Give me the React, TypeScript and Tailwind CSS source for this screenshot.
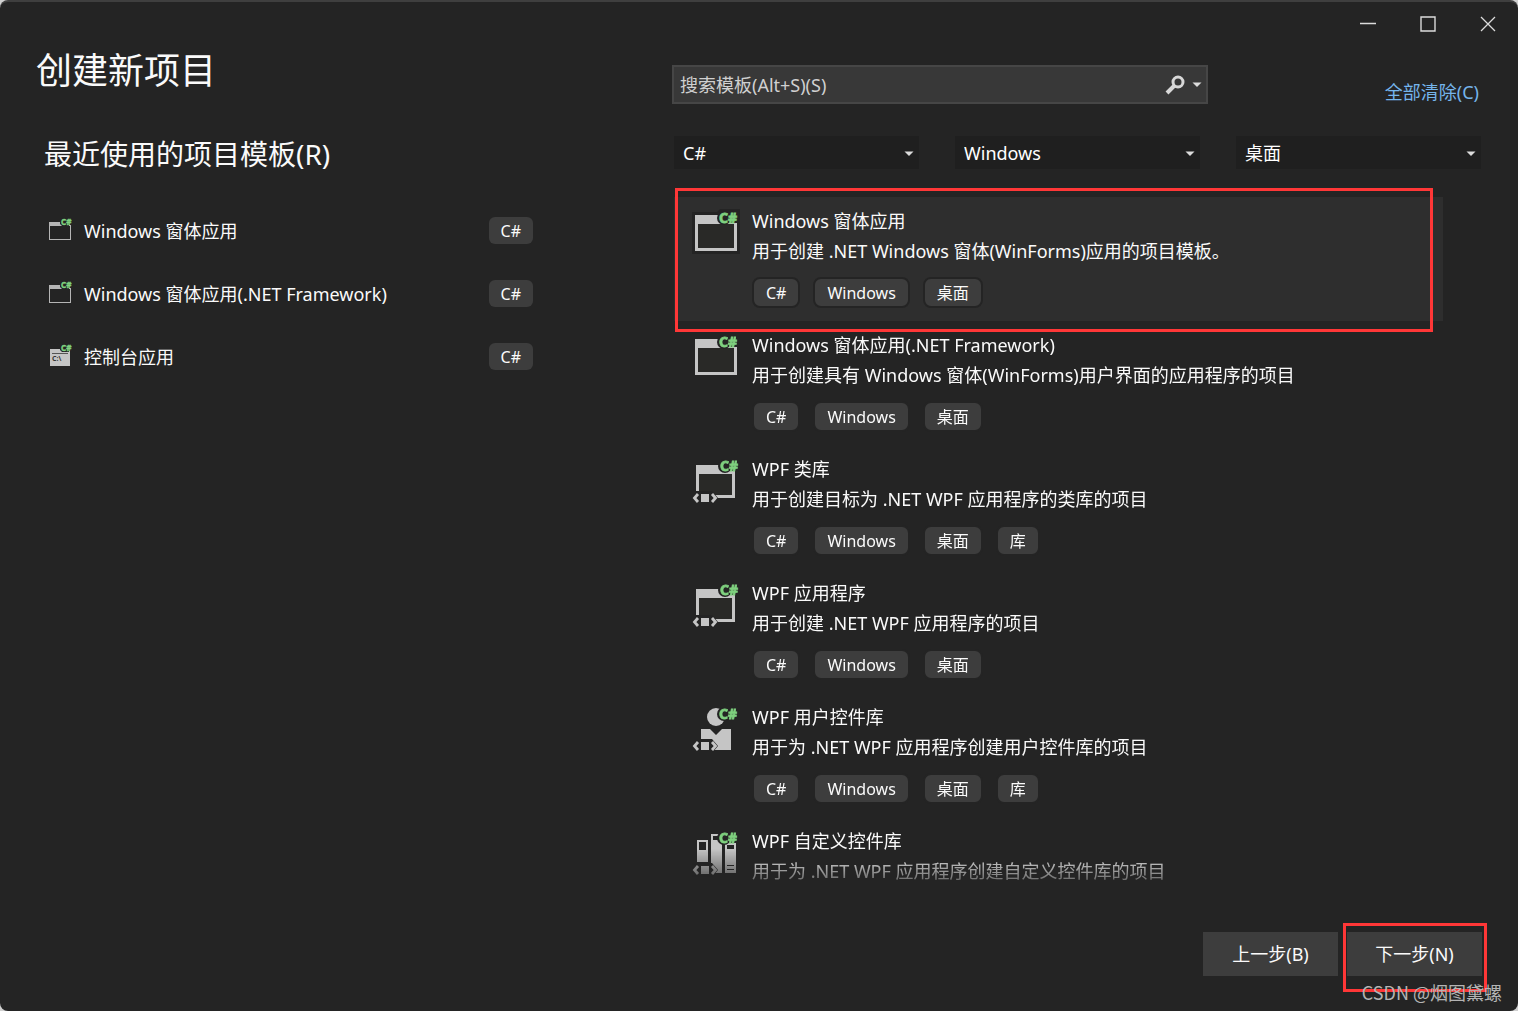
import React from 'react';

type IconKind = 'window' | 'wpf' | 'user' | 'custom';

interface Template {
  name: string;
  desc: string;
  icon: IconKind;
  tags: string[];
}

const recent = [
  { name: 'Windows 窗体应用', console: false },
  { name: 'Windows 窗体应用(.NET Framework)', console: false },
  { name: '控制台应用', console: true },
];

const templates: Template[] = [
  {
    name: 'Windows 窗体应用',
    desc: '用于创建 .NET Windows 窗体(WinForms)应用的项目模板。',
    icon: 'window',
    tags: ['C#', 'Windows', '桌面'],
  },
  {
    name: 'Windows 窗体应用(.NET Framework)',
    desc: '用于创建具有 Windows 窗体(WinForms)用户界面的应用程序的项目',
    icon: 'window',
    tags: ['C#', 'Windows', '桌面'],
  },
  {
    name: 'WPF 类库',
    desc: '用于创建目标为 .NET WPF 应用程序的类库的项目',
    icon: 'wpf',
    tags: ['C#', 'Windows', '桌面', '库'],
  },
  {
    name: 'WPF 应用程序',
    desc: '用于创建 .NET WPF 应用程序的项目',
    icon: 'wpf',
    tags: ['C#', 'Windows', '桌面'],
  },
  {
    name: 'WPF 用户控件库',
    desc: '用于为 .NET WPF 应用程序创建用户控件库的项目',
    icon: 'user',
    tags: ['C#', 'Windows', '桌面', '库'],
  },
  {
    name: 'WPF 自定义控件库',
    desc: '用于为 .NET WPF 应用程序创建自定义控件库的项目',
    icon: 'custom',
    tags: [],
  },
];

const Brackets: React.FC = () => (
  <g>
    <path d="M0 34 H20 L26 41 L20 48 H0 Z" fill="#242424" />
    <path d="M6 37 L2.5 41 L6 45 M20 37 L23.5 41 L20 45" fill="none" stroke="#c5c5c5" strokeWidth="2.8" />
    <rect x="9" y="37" width="8" height="8" fill="#c5c5c5" />
  </g>
);

const TemplateIcon: React.FC<{ kind: IconKind; selected: boolean }> = ({ kind, selected }) => (
  <svg width="48" height="48" viewBox="0 0 48 48" className="shrink-0 overflow-visible" aria-hidden="true">
    {selected && <path d="M0 3 H25 L28 0 H48 V45 H0 Z" fill="#242424" />}
    {kind === 'window' && (
      <g>
        <path d="M3 6 H45 V42 H3 Z" fill="#c5c5c5" />
        <path d="M6 15 H42 V39 H6 Z" fill="#292927" />
      </g>
    )}
    {kind === 'wpf' && (
      <g>
        <path d="M4 8 H43 V41 H4 Z" fill="#c5c5c5" />
        <path d="M7 17 H40 V38 H7 Z" fill="#292927" />
      </g>
    )}
    {kind === 'user' && (
      <g fill="#c5c5c5">
        <circle cx="24" cy="12" r="9" />
        <path d="M9 24 H18 L24 30 L30 24 H39 V45 H9 Z" />
      </g>
    )}
    {kind === 'custom' && (
      <g>
        <path d="M5 11 H16 V33 H5 Z M19 5 H30 V44 H19 Z M33 11 H44 V44 H33 Z" fill="#c5c5c5" />
        <path d="M7 13 H14 V21 H7 Z M21 7 H30 V11 H21 Z M35 16 H42 V20 H35 Z M35 36 H42 V37 H35 Z M35 40 H42 V41 H35 Z" fill="#242424" />
      </g>
    )}
    {kind !== 'window' && <Brackets />}
    <g transform={kind === 'wpf' ? 'translate(1 0)' : undefined}>
      <circle cx="32" cy="9" r="7" fill="#242424" />
      <path d="M32 2 H48 V14 H32 Z" fill="#242424" />
      <text
        x="27"
        y="14"
        className="font-['Noto_Sans'] text-[14px] font-bold"
        fill="#7fd17f"
        stroke="#7fd17f"
        strokeWidth="0.8"
      >
        C#
      </text>
    </g>
  </svg>
);

const RecentIcon: React.FC<{ console: boolean }> = ({ console }) => (
  <svg width="24" height="24" viewBox="0 0 24 24" className="shrink-0 overflow-visible" aria-hidden="true">
    {console ? (
      <g>
        <path d="M2 4 H22 V21 H2 Z" fill="#c5c5c5" />
        <path d="M4 8.5 H20" stroke="#555" />
        <text x="4" y="16" className="font-['Noto_Sans'] text-[7px] font-bold" fill="#333">
          C:\
        </text>
      </g>
    ) : (
      <g>
        <path d="M1 3 H23 V21 H1 Z" fill="#b5b5b5" />
        <path d="M2 7 H22 V20 H2 Z" fill="#242424" />
      </g>
    )}
    <path d="M12 0 H24 V6 H21 V7 H14 L12 5 Z" fill="#242424" />
    <text
      x="13"
      y="6"
      className="font-['Noto_Sans'] text-[8px] font-bold"
      fill="#7fd17f"
      stroke="#7fd17f"
      strokeWidth="0.4"
    >
      C#
    </text>
  </svg>
);

const Caret: React.FC<{ className?: string }> = ({ className }) => (
  <svg width="10" height="6" viewBox="0 0 10 6" className={className} aria-hidden="true">
    <path d="M0.5 0.5 H9.5 L5 5 Z" fill="#dcdcdc" />
  </svg>
);

const Tag: React.FC<{ children: React.ReactNode }> = ({ children }) => (
  <span className="flex h-[31px] items-center rounded-lg border-2 border-[#242424] bg-[#3d3d3d] px-3 text-base">
    {children}
  </span>
);

const Filter: React.FC<{ label: string; value: string }> = ({ label, value }) => (
  <div className="relative">
    <select
      aria-label={label}
      defaultValue={value}
      className="block h-[33px] w-full appearance-none bg-[#1f1f1f] pl-[9px] text-lg leading-6 text-white outline-none"
    >
      <option>{value}</option>
    </select>
    <Caret className="pointer-events-none absolute top-[15px] right-[5px]" />
  </div>
);

const App: React.FC = () => {
  return (
    <div className="bg-[#d0d0d0] font-['Noto_Sans','Noto_Sans_CJK_SC',sans-serif]">
      <div className="relative flex h-screen flex-col overflow-hidden rounded-lg border-t-2 border-[#3f3f3f] bg-[#242424] text-lg text-[#fafafa]">
        <header className="flex h-11 shrink-0 justify-end">
          <button aria-label="最小化" className="flex w-15 items-center justify-center">
            <svg width="16" height="16" viewBox="0 0 16 16">
              <path d="M0 7.5 H16" stroke="#dcdcdc" strokeWidth="1.4" />
            </svg>
          </button>
          <button aria-label="最大化" className="flex w-15 items-center justify-center">
            <svg width="16" height="16" viewBox="0 0 16 16">
              <path d="M1 1 H15 V15 H1 Z" fill="none" stroke="#dcdcdc" strokeWidth="1.4" />
            </svg>
          </button>
          <button aria-label="关闭" className="flex w-15 items-center justify-center">
            <svg width="16" height="16" viewBox="0 0 16 16">
              <path d="M1 1 L15 15 M15 1 L1 15" stroke="#dcdcdc" strokeWidth="1.3" />
            </svg>
          </button>
        </header>

        <main className="flex min-h-0 flex-1 pr-[37px] pl-9">
          <section className="w-[497px] shrink-0">
            <h1 className="text-4xl leading-[50px]">创建新项目</h1>
            <h2 className="mt-[37px] ml-2 text-[28px] leading-[42px]">最近使用的项目模板(R)</h2>
            <ul className="mt-6 ml-3">
              {recent.map((item) => (
                <li key={item.name}>
                  <button className="flex h-[63px] w-full items-center gap-3 text-left">
                    <RecentIcon console={item.console} />
                    <span className="flex-1">{item.name}</span>
                    <span className="flex h-[27px] items-center rounded-md bg-[#3d3d3d] px-3 text-base">C#</span>
                  </button>
                </li>
              ))}
            </ul>
          </section>

          <section className="ml-[139px] flex min-w-0 flex-1 flex-col pt-[19px]">
            <div className="flex shrink-0 items-end justify-between">
              <div className="flex h-[39px] w-[536px] items-center border-2 border-[#464646] bg-[#383838] pr-1 pl-[6px]">
                <input
                  type="text"
                  aria-label="搜索模板"
                  placeholder="搜索模板(Alt+S)(S)"
                  className="h-full min-w-0 flex-1 bg-transparent text-lg outline-none placeholder:text-[#d0d0d0]"
                />
                <button aria-label="搜索" className="mr-[6px]">
                  <svg width="22" height="20" viewBox="0 0 22 20">
                    <circle cx="14" cy="7" r="5" fill="none" stroke="#d8d8d8" strokeWidth="3" />
                    <path d="M10.5 10.5 L3 18" stroke="#d8d8d8" strokeWidth="4" />
                  </svg>
                </button>
                <button aria-label="搜索选项">
                  <Caret />
                </button>
              </div>
              <a href="#clear" className="mr-[2px] leading-6 text-[#75b5ec]">
                全部清除(C)
              </a>
            </div>

            <div className="mt-8 ml-[2px] grid shrink-0 grid-cols-3 gap-9">
              <Filter label="语言" value="C#" />
              <Filter label="平台" value="Windows" />
              <Filter label="项目类型" value="桌面" />
            </div>

            <ul className="mt-[19px] mr-[38px] ml-[2px] min-h-0 flex-1 overflow-hidden mask-[linear-gradient(to_bottom,black_calc(100%-48px),transparent)] pt-[9px]">
              {templates.map((item, i) => (
                <li key={item.name} className="relative">
                  <button
                    className={`flex h-[124px] w-full items-start gap-3 pl-[18px] text-left ${i === 0 ? 'bg-[#2e2e2e]' : ''}`}
                  >
                    <span className="pt-3">
                      <TemplateIcon kind={item.icon} selected={i === 0} />
                    </span>
                    <span className="block pt-[9px] leading-[30px] whitespace-nowrap">
                      <span className="block">{item.name}</span>
                      <span className="block">{item.desc}</span>
                      <span className="mt-[11px] flex gap-[13px]">
                        {item.tags.map((tag) => (
                          <Tag key={tag}>{tag}</Tag>
                        ))}
                      </span>
                    </span>
                  </button>
                  {i === 0 && (
                    <span className="pointer-events-none absolute -top-[9px] right-[10px] -bottom-[11px] left-[1px] z-10 border-3 border-[#ff3737]" />
                  )}
                </li>
              ))}
            </ul>
          </section>
        </main>

        <footer className="mt-[35px] mb-[35px] flex shrink-0 justify-end gap-[9px] pr-9">
          <button className="h-11 w-[135px] bg-[#3d3d3d]">上一步(B)</button>
          <div className="relative">
            <button className="h-11 w-[135px] bg-[#3d3d3d]">下一步(N)</button>
            <span className="pointer-events-none absolute -top-[9px] -right-[5px] -bottom-[16px] -left-[4px] border-3 border-[#ff3737]" />
          </div>
        </footer>

        <p className="absolute right-4 bottom-[7px] font-['Noto_Sans_CJK_SC',sans-serif] leading-6 text-[#b4b4b4]">
          CSDN @烟图黛螺
        </p>
      </div>
    </div>
  );
};

export default App;
